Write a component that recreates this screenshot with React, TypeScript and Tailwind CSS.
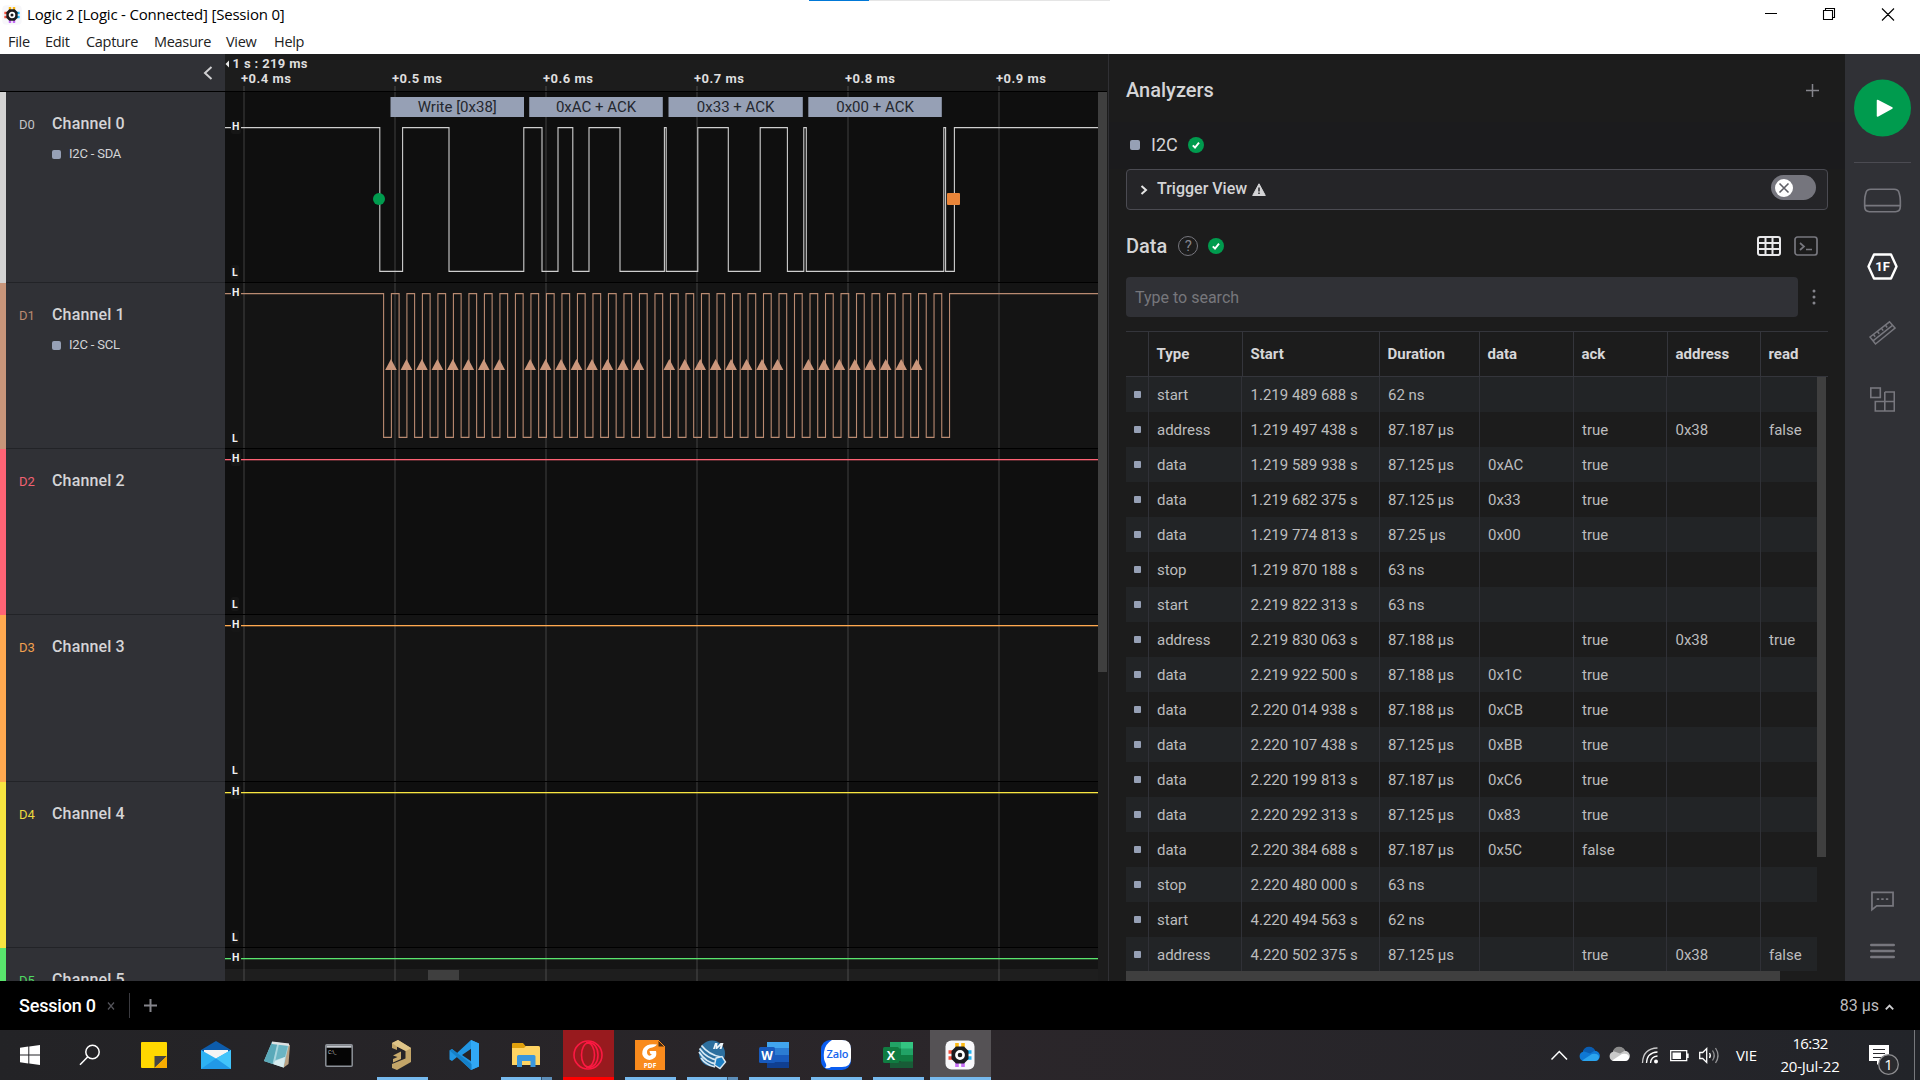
import React from "react";

type Row = [string, string, string, string, string, string, string];

const rows: Row[] = [
  ["start", "1.219 489 688 s", "62 ns", "", "", "", ""],
  ["address", "1.219 497 438 s", "87.187 µs", "", "true", "0x38", "false"],
  ["data", "1.219 589 938 s", "87.125 µs", "0xAC", "true", "", ""],
  ["data", "1.219 682 375 s", "87.125 µs", "0x33", "true", "", ""],
  ["data", "1.219 774 813 s", "87.25 µs", "0x00", "true", "", ""],
  ["stop", "1.219 870 188 s", "63 ns", "", "", "", ""],
  ["start", "2.219 822 313 s", "63 ns", "", "", "", ""],
  ["address", "2.219 830 063 s", "87.188 µs", "", "true", "0x38", "true"],
  ["data", "2.219 922 500 s", "87.188 µs", "0x1C", "true", "", ""],
  ["data", "2.220 014 938 s", "87.188 µs", "0xCB", "true", "", ""],
  ["data", "2.220 107 438 s", "87.125 µs", "0xBB", "true", "", ""],
  ["data", "2.220 199 813 s", "87.187 µs", "0xC6", "true", "", ""],
  ["data", "2.220 292 313 s", "87.125 µs", "0x83", "true", "", ""],
  ["data", "2.220 384 688 s", "87.187 µs", "0x5C", "false", "", ""],
  ["stop", "2.220 480 000 s", "63 ns", "", "", "", ""],
  ["start", "4.220 494 563 s", "62 ns", "", "", "", ""],
  ["address", "4.220 502 375 s", "87.125 µs", "", "true", "0x38", "false"],
];

const headCols = "grid-cols-[22px_94px_137px_100px_94px_94px_93px_68px]";
const bodyCols = "grid-cols-[22px_93px_138px_100px_94px_93px_94px_57px]";

const channels = [
  { id: "D0", name: "Channel 0", sub: "I2C - SDA", bar: "bg-[#d3d3d3]", text: "text-[#c3c3c6]", h: "h-[191px]" },
  { id: "D1", name: "Channel 1", sub: "I2C - SCL", bar: "bg-[#c8957a]", text: "text-[#b98a70]", h: "h-[166px]" },
  { id: "D2", name: "Channel 2", bar: "bg-[#ff6375]", text: "text-[#f06272]", h: "h-[166px]" },
  { id: "D3", name: "Channel 3", bar: "bg-[#ffa950]", text: "text-[#f0a04f]", h: "h-[167px]" },
  { id: "D4", name: "Channel 4", bar: "bg-[#f8e540]", text: "text-[#e9d83f]", h: "h-[166px]" },
  { id: "D5", name: "Channel 5", bar: "bg-[#59e56d]", text: "text-[#4fd963]", h: "h-[166px]" },
];

const lanes = [
  { top: 92, bottom: 282, color: "#dcdcdc" },
  { top: 283, bottom: 448, color: "#c8957a" },
  { top: 449, bottom: 614, color: "#ff6375" },
  { top: 615, bottom: 781, color: "#ffa950" },
  { top: 782, bottom: 947, color: "#f8e540" },
  { top: 948, bottom: 1114, color: "#59e56d" },
];
const highs = [127, 293, 459, 625, 792, 958];

const sda = [379.8, 402.6, 449, 523.8, 542, 558, 572.8, 589, 620, 664.4, 666.2, 697.8, 728.3, 760.2, 787.4, 803.8, 806.3, 943.8, 945.6, 954.4];
const scl = Array.from({ length: 37 }, (_, i) => {
  const rise = 391.4 + 15.504 * i;
  return [rise - 7.8, rise];
}).flat();

function wave(edges: number[], hi: number, lo: number) {
  let d = `M225 ${hi}`;
  edges.forEach((x, i) => {
    d += `H${x}V${i % 2 === 0 ? lo : hi}`;
  });
  return d + "H1098";
}

const bubbles = [
  { x: 390.5, w: 133.5, t: "Write [0x38]" },
  { x: 529.2, w: 133.6, t: "0xAC + ACK" },
  { x: 668.5, w: 134.3, t: "0x33 + ACK" },
  { x: 808.3, w: 133.5, t: "0x00 + ACK" },
];

function Waveforms() {
  return (
    <svg width="873" height="927" viewBox="225 54 873 927" className="block">
      <rect x="225" y="54" width="873" height="37" fill="#1c1c1c" />
      {lanes.map((l, i) => (
        <rect key={i} x="225" y={l.top} width="873" height={l.bottom - l.top} fill={i % 2 ? "#141414" : "#0f0f0f"} />
      ))}
      <rect x="225" y="969" width="873" height="12" fill="#1e1e1e" />
      {[244, 395, 546, 697, 848, 999].map((x) => (
        <rect key={x} x={x - 1} y="86" width="2" height="895" fill="#ffffff" fillOpacity="0.1" />
      ))}
      <rect x="428" y="970" width="31" height="10" fill="#3f3f3f" />
      {[91, 282, 448, 614, 781, 947].map((y) => (
        <rect key={y} x="225" y={y} width="873" height="1" fill="#000" />
      ))}
      <path d={wave(sda, 127.6, 271.4)} fill="none" stroke="#cfcfcf" strokeWidth="1.1" />
      <path d={wave(scl, 293.6, 437.4)} fill="none" stroke="#b98a71" strokeWidth="1.1" />
      {highs.slice(2).map((y, i) => (
        <rect key={y} x="225" y={y} width="873" height="1.3" fill={lanes[i + 2].color} />
      ))}
      {Array.from({ length: 36 }, (_, i) => i)
        .filter((i) => i % 9 !== 8)
        .map((i) => {
          const x = 391 + 15.46 * i;
          return <path key={i} d={`M${x - 5.8} 370L${x} 359L${x + 5.8} 370Z`} fill="#cb977c" />;
        })}
      <circle cx="379" cy="199" r="6" fill="#009b4e" />
      <rect x="947" y="193" width="13" height="12" rx="1" fill="#e98539" />
      {bubbles.map((b) => (
        <g key={b.t}>
          <rect x={b.x} y="97" width={b.w} height="20" fill="#96a0b5" />
          <text x={b.x + b.w / 2} y="112" textAnchor="middle" fontSize="15" fill="#24272e">{b.t}</text>
        </g>
      ))}
      {highs.map((y) => (
        <g key={y} fontSize="10.5" fontWeight="700" fill="#f0f0f0">
          <rect x="231" y={y - 7} width="10" height="14" rx="2" fill="#161616" />
          <text x="232" y={y + 3.2}>H</text>
          {y < 900 && <rect x="231" y={y + 138} width="8" height="14" rx="2" fill="#161616" />}
          {y < 900 && <text x="232" y={y + 148.6}>L</text>}
        </g>
      ))}
      <path d="M229 60.5V67.500L225.500 64Z" fill="#e6e6e6" />
      <text x="232.500" y="68" fontSize="13" fontWeight="700" fill="#dedede" textLength="75" xmlSpace="preserve">1 s : 219 ms</text>
      {["+0.4 ms", "+0.5 ms", "+0.6 ms", "+0.7 ms", "+0.8 ms", "+0.9 ms"].map((t, i) => (
        <text key={t} x={241 + 151 * i} y="82.500" fontSize="13" fontWeight="700" fill="#dedede" textLength="50">{t}</text>
      ))}
    </svg>
  );
}

function Check() {
  return (
    <svg width="16" height="16" viewBox="0 0 16 16">
      <circle cx="8" cy="8" r="8" fill="#009b4e" />
      <path d="M4.800 8.300L7 10.500L11 5.600" fill="none" stroke="#fff" strokeWidth="1.900" />
    </svg>
  );
}

function LogicLogo({ size }: { size: number }) {
  return (
    <svg width={size} height={size} viewBox="0 0 30 30">
      <rect x="0.500" y="0.500" width="29" height="29" rx="6" fill="#f7f7fa" />
      <path d="M12 3v6M18 3v6" stroke="#fdb913" strokeWidth="3.600" />
      <path d="M12 21v6M18 21v6" stroke="#c56cf5" strokeWidth="3.600" />
      <path d="M3.500 12h6M3.500 18h6" stroke="#f4503c" strokeWidth="3.400" />
      <path d="M20.500 12h6M20.500 18h6" stroke="#21b5f3" strokeWidth="3.400" />
      <path d="M11 6.500h8L23.500 11v8L19 23.500h-8L6.500 19v-8Z" fill="#1b1b1f" />
      <circle cx="15" cy="15" r="3.600" fill="none" stroke="#fff" strokeWidth="2.600" />
    </svg>
  );
}

function TitleBar() {
  return (
    <header className="h-[54px] bg-white font-['Open_Sans',sans-serif] text-black">
      <div className="flex h-[29px] items-center">
        <div className="ml-[2px] w-[25px]"><LogicLogo size={20} /></div>
        <span className="mb-[2px] w-[780px] text-[15px] leading-[20px] tracking-[-0.2px]">Logic 2 [Logic - Connected] [Session 0]</span>
        <div className="ml-[2px] flex h-px w-[301px] self-start bg-[#e5e5e5]">
          <div className="w-[60px] bg-[#0078d7]" />
        </div>
        <div className="ml-auto flex">
          <svg width="160" height="29" viewBox="1760 0 160 29" fill="none" stroke="#000">
            <path d="M1765 13.500h12M1823.500 10.500h9v9h-9zM1825.500 10.500v-2h9v9h-2M1882 8.500l12 12M1894 8.500l-12 12" strokeWidth="1.100" />
          </svg>
        </div>
      </div>
      <nav className="flex h-[25px] text-[14.5px] leading-[25px] tracking-[-0.3px] text-[#222]">
        <span className="ml-[8px] w-[37px]">File</span>
        <span className="w-[41px]">Edit</span>
        <span className="w-[68px]">Capture</span>
        <span className="w-[72px]">Measure</span>
        <span className="w-[48px]">View</span>
        <span>Help</span>
      </nav>
    </header>
  );
}

function ChannelList() {
  return (
    <aside className="flex h-[927px] w-[225px] flex-col overflow-hidden bg-[#303136]">
      <div className="flex h-[38px] shrink-0 items-center justify-end border-b border-black pr-[12px]">
        <svg width="10" height="14" viewBox="0 0 10 14"><path d="M8.500 1L2 7l6.500 6" fill="none" stroke="#d0d0d2" strokeWidth="2" /></svg>
      </div>
      {channels.map((c) => (
        <div key={c.id} className={`flex shrink-0 ${c.h}`}>
          <div className={`w-[6px] ${c.bar}`} />
          <div className="flex flex-1 border-b border-[#222327] pl-[13px] pt-[22px]">
            <span className={`w-[33px] pt-px text-[13px] leading-[20px] ${c.text}`}>{c.id}</span>
            <div>
              <div className="text-[16px] font-medium leading-[20px] tracking-[0.15px] text-[#d4d4d6]">{c.name}</div>
              {c.sub && (
                <div className="mt-[11px] flex items-center gap-[8px] text-[13px] leading-[18px] tracking-[-0.2px] text-[#d4d4d6]">
                  <i className="size-[9px] rounded-[2px] bg-[#96a0b5]" />
                  {c.sub}
                </div>
              )}
            </div>
          </div>
        </div>
      ))}
    </aside>
  );
}

function DataTable() {
  return (
    <div className="mt-[14px] flex h-[650px] w-[702px] flex-col">
      <div className={`grid h-[46px] shrink-0 border-y border-[#34353b] ${headCols}`}>
        {["", "Type", "Start", "Duration", "data", "ack", "address", "read"].map((h, i) => (
          <div key={i} className={`pl-[7.5px] text-[15px] font-bold leading-[44px] text-[#d6d6d8] ${i ? "border-l border-[#34353b]" : ""}`}>{h}</div>
        ))}
      </div>
      <div className="flex h-[594px] overflow-hidden">
        <div className="w-[691px]">
          {rows.map((r, i) => (
            <div key={i} className={`grid h-[35px] ${bodyCols} ${i % 2 ? "bg-[#1c1c1c]" : "bg-[#222426]"}`}>
              <div className="flex items-center pl-[8px]"><i className="mb-px size-[7px] rounded-[1px] bg-[#96a0b5]" /></div>
              {r.map((v, j) => (
                <div key={j} className={`border-l border-[#303137] text-[15px] leading-[36px] text-[#bcbcbe] ${j === 1 || j === 5 ? "pl-[8.5px]" : "pl-[8px]"}`}>{v}</div>
              ))}
            </div>
          ))}
        </div>
        <div className="h-[480px] w-[9px] bg-[#3f3f3f]" />
      </div>
      <div className="h-[10px] w-[654px] bg-[#3f3f3f]" />
    </div>
  );
}

function AnalyzerPanel() {
  return (
    <section className="h-[927px] w-[737px] overflow-hidden border-l border-[#303034] bg-[#1c1c1c] text-[#d4d4d6]">
      <div className="flex h-[68px] items-center pl-[17px] pr-[26px] pt-[4px]">
        <h1 className="flex-1 text-[20px] font-medium">Analyzers</h1>
        <svg width="13" height="13" viewBox="0 0 13 13"><path d="M6.500 0v13M0 6.500h13" stroke="#85858c" strokeWidth="1.500" /></svg>
      </div>
      <div className="flex h-[47px] items-center bg-[#1b1b1d] pb-[2px] pl-[21px]">
        <i className="size-[10px] rounded-[2px] bg-[#96a0b5]" />
        <span className="ml-[11px] mr-[10px] text-[18px] leading-[24px]">I2C</span>
        <Check />
      </div>
      <div className="ml-[17px] flex h-[41px] w-[702px] items-center rounded-[4px] border border-[#4b4b52] bg-[#252528] pl-[13px] pr-[11px]">
        <svg width="8" height="10" viewBox="0 0 8 10"><path d="M1.500 1L6 5L1.500 9" fill="none" stroke="#e6e6e6" strokeWidth="2" /></svg>
        <span className="mb-[2px] ml-[9px] mr-[5px] text-[16px] font-medium">Trigger View</span>
        <svg width="14" height="13" viewBox="0 0 14 13"><path d="M7 0.800L13.300 12.500H0.700Z" fill="#d4d4d6" stroke="#d4d4d6" strokeLinejoin="round" /><path d="M7 4.500v4M7 9.600v1.500" stroke="#252528" strokeWidth="1.500" /></svg>
        <div className="mb-[4px] ml-auto flex h-[25px] w-[45px] items-center rounded-full bg-[#75757d] pl-[4px]">
          <svg width="18" height="18" viewBox="0 0 18 18"><circle cx="9" cy="9" r="9" fill="#fff" /><path d="M4.500 4.500l9 9M13.500 4.500l-9 9" stroke="#5f5f66" strokeWidth="1.600" /></svg>
        </div>
      </div>
      <div className="flex h-[67px] items-center pl-[17px] pt-[5px]">
        <h2 className="mr-[11px] text-[20px] font-medium">Data</h2>
        <span className="mr-[10px] flex size-[20px] items-center justify-center rounded-full border-[1.5px] border-[#77777e] text-[15px] text-[#85858c]">?</span>
        <Check />
        <svg className="ml-auto mr-[13px]" width="24" height="20" viewBox="0 0 24 20" fill="none" stroke="#e8e8ea" strokeWidth="2">
          <rect x="1" y="1" width="22" height="18" rx="2" /><path d="M8.500 1v18M15.500 1v18M1 7h22M1 13h22" />
        </svg>
        <svg className="mr-[27px]" width="24" height="20" viewBox="0 0 24 20" fill="none" stroke="#77777e" strokeWidth="1.700">
          <rect x="1" y="1" width="22" height="18" rx="2.500" /><path d="M6 7l4 3.500L6 14M12 13.500h6" />
        </svg>
      </div>
      <div className="flex h-[40px] items-center pl-[17px]">
        <div className="h-[40px] w-[672px] rounded-[4px] bg-[#303136] pl-[9px] text-[16px] leading-[41px] text-[#77777c]">Type to search</div>
        <svg className="ml-[13.5px]" width="4" height="16" viewBox="0 0 4 16" fill="#85858c"><circle cx="2" cy="2" r="1.500" /><circle cx="2" cy="8" r="1.500" /><circle cx="2" cy="14" r="1.500" /></svg>
      </div>
      <div className="pl-[17px]"><DataTable /></div>
    </section>
  );
}

function Rail() {
  const s = "#77777e";
  return (
    <aside className="flex h-[927px] w-[75px] flex-col items-center bg-[#303136]">
      <svg className="mt-[25px]" width="57" height="58" viewBox="0 0 57 58"><circle cx="28.500" cy="29" r="28.500" fill="#009b4e" /><path d="M23.500 21.500L38 29L23.500 37Z" fill="#fff" stroke="#fff" strokeWidth="1.500" strokeLinejoin="round" /></svg>
      <div className="mt-[25px] h-px w-[57px] bg-[#4b4b52]" />
      <svg className="mt-[25px]" width="39" height="25" viewBox="0 0 40 25" fill="none" stroke={s} strokeWidth="1.700"><path d="M8 1h24c3 0 4.300 1 5 3.500q1.300 4 1.300 8.500v5.500c0 4-1.500 5.500-5 5.500H6.700c-3.500 0-5-1.500-5-5.500V13q0-4.500 1.300-8.500C3.700 2 5 1 8 1zM2 17.800h36" /></svg>
      <svg className="mt-[40px]" width="31" height="27" viewBox="0.500 0 31 27"><path d="M7.500 1.500h17L30 13.500L24.500 25.500h-17L2 13.500Z" fill="none" stroke="#fff" strokeWidth="2.400" strokeLinejoin="round" /><text x="16" y="18.300" textAnchor="middle" fontSize="13" fontWeight="700" fill="#fff">1F</text></svg>
      <svg className="mt-[40px]" width="27" height="26" viewBox="0.500 0 27 26" fill="none" stroke={s} strokeWidth="1.500"><path d="M1.500 17L21 1.800L26.500 8L7 24ZM4.500 20.800L24 5.300M5 14.500l1.700 2.300M9 11.500l1.700 2.300M13 8.300l1.700 2.300M17 5.200l1.700 2.300" /></svg>
      <svg className="mt-[41px]" width="25" height="26" viewBox="0.200 0 25 26" fill="none" stroke={s} strokeWidth="1.600"><rect x="1" y="1" width="9.500" height="9.500" /><path d="M15 5h9.500v19H5.500v-9.500h19M15 5v19" /></svg>
      <svg className="mt-auto" width="23" height="21" viewBox="0 0 24 21" fill="none" stroke={s} strokeWidth="1.800"><path d="M1 19V1h22v14H6Z" /><path d="M6 8h2.500M10.700 8h2.500M15.500 8h2.500" /></svg>
      <svg className="mb-[21px] mt-[31px]" width="25" height="17" viewBox="0 0 25 17" stroke={s} strokeWidth="2.600" strokeLinecap="round"><path d="M1.300 2h22.400M1.300 8h22.400M1.300 14h22.400" /></svg>
    </aside>
  );
}

function SessionBar() {
  return (
    <div className="flex h-[49px] items-center bg-black">
      <span className="ml-[19px] w-[88px] text-[18px] font-medium tracking-[-0.2px] text-white">Session 0</span>
      <svg width="8" height="8" viewBox="0 0 8 8"><path d="M1 0.500l6 7M7 0.500l-6 7" stroke="#55555b" strokeWidth="1.200" /></svg>
      <div className="ml-[14px] h-[25px] w-px bg-[#3a3a3f]" />
      <svg className="ml-[14px]" width="13" height="13" viewBox="0 0 13 13"><path d="M6.500 0v13M0 6.500h13" stroke="#85858c" strokeWidth="2" /></svg>
      <span className="ml-auto mr-[6px] text-[16px] text-[#bcbcbe]">83 µs</span>
      <svg className="mr-[26px] mt-[3px]" width="9" height="6" viewBox="0 0 9 6"><path d="M0.800 5.300L4.500 1.500L8.200 5.300" fill="none" stroke="#d0d0d2" strokeWidth="1.800" /></svg>
    </div>
  );
}

const apps: { bar?: "full" | "split"; cell?: string; icon: React.ReactNode }[] = [
  { icon: <svg width="20" height="20" viewBox="0 0 20 20" fill="#fff"><path d="M0 2.800L8.300 1.600V9.500H0ZM9.300 1.400L20 0V9.500H9.300ZM0 10.500H8.300V18.400L0 17.200ZM9.300 10.500H20V20L9.300 18.600Z" /></svg> },
  { icon: <svg className="mr-[4px]" width="22" height="22" viewBox="0 0 22 22" fill="none" stroke="#fff" strokeWidth="1.500"><circle cx="13.500" cy="8" r="6.700" /><path d="M8.800 12.800L1 20.800" /></svg> },
  { icon: <svg width="26" height="26" viewBox="0 0 26 26"><path d="M1 0h24a1 1 0 011 1v24a1 1 0 01-1 1H1a1 1 0 01-1-1V1a1 1 0 011-1z" fill="#ffd800" /><path d="M13.500 26V14H26Z" fill="#454545" /><path d="M13.500 26L26 14V26Z" fill="#f8ac00" /></svg> },
  { icon: <svg width="30" height="28" viewBox="0 0 30 28"><path d="M0 9L15 0L30 9V14H0Z" fill="#0d5cab" /><path d="M3 9H27V19H3Z" fill="#f4f4f4" /><path d="M0 9L15 17.500L30 9V28H0Z" fill="#2db2f3" /><path d="M15 17.500L30 9V28Z" fill="#42c4fa" /><path d="M0 28L15 17.500L30 28Z" fill="#1c8ee0" opacity=".7" /></svg> },
  { icon: <svg className="mr-[2px]" width="28" height="28" viewBox="0 0 28 28"><path d="M23 3L27 4L25.500 23L20 27Z" fill="#b9a183" /><path d="M9 1L26 3L20.500 26.500L1 20Z" fill="#a9d6de" /><path d="M9 1L14.500 1.700L9.500 23L1 20Z" fill="#5aa9b9" /><path d="M16 3L25 4.500L22 16L12.500 19Z" fill="#6bb5c3" /><path d="M12 20L22 16L20.500 26.500L10.500 23.200Z" fill="#d7ecef" /><path d="M9 0.500L26 2.500V5L9 3Z" fill="#dde1e2" /></svg> },
  { icon: <svg className="mr-[2px]" width="28" height="23" viewBox="0 0 28 23"><rect x="0.800" y="0.800" width="26.400" height="21.400" rx="1" fill="#050505" stroke="#8d9299" strokeWidth="1.500" /><path d="M1.500 1.500h25v2.200h-25z" fill="#c6cad0" /><text x="3" y="9.500" fontSize="5" fill="#ddd">C:\_</text></svg> },
  { bar: "full", icon: <svg width="20" height="30" viewBox="0 0 20 30"><path d="M0 3L6 0L19 8V22L5 30L0 28V24L13.500 18.500V11L5 6.500V10L0 8Z" fill="#c3a568" /><path d="M0 3L6 0L19 8L14 11L5 6.500Z" fill="#dfc588" /><path d="M1 15.500L9 11.500V19L1 22.500V19L5.500 17Z" fill="#c9ab6c" /></svg> },
  { icon: <svg width="30" height="30" viewBox="0 0 30 30"><path d="M22 0L30 3.500V26.500L22 30L8 17L3 21L0.500 19.500V10.500L3 9L8 13ZM22.500 8.500L13 15L22.500 21.500Z" fill="#2196e3" fillRule="evenodd" /><path d="M22 0L30 3.500V26.500L22 30Z" fill="#31a8f5" /><path d="M0.500 10.500L3 9L22.500 24V30L8 17Z" fill="#1580c8" /></svg> },
  { bar: "split", icon: <svg width="28" height="24" viewBox="0 0 28 24"><path d="M0 1Q0 0 1 0H11L13.500 3H26Q28 3 28 5V22H0Z" fill="#e0a10d" /><path d="M0 5H12L14 3H26Q28 3 28 5V22H0Z" fill="#ffd463" /><path d="M5 24V13.500Q5 12 6.500 12H22Q23.500 12 23.500 13.500V24H18.500V18H10V24Z" fill="#3b97dd" /></svg> },
  { cell: "opera", icon: <svg width="30" height="30" viewBox="0 0 30 30" fill="none" stroke="#fb1942" strokeWidth="1.600"><circle cx="15" cy="15" r="14" /><ellipse cx="15" cy="15" rx="6.500" ry="12" /><path d="M13 3C22 1 25 9 25 15S22 29 13 27" /></svg> },
  { bar: "full", icon: <svg width="30" height="30" viewBox="0 0 30 30"><path d="M0 0H23L30 7V30H0Z" fill="#f98b1d" /><path d="M23 0V7H30Z" fill="#4a2b10" stroke="#f98b1d" /><path d="M22 4.500Q12 3 8.500 8.500Q5.500 14 9.500 18Q15 22 20 17.500Q22 15 21 11H14.500Q15 14.500 17 14.500Q14 17 12.300 14Q11 9.500 15 8Q20 7 22 4.500Z" fill="#fff" /><text x="15" y="28" textAnchor="middle" fontSize="6.500" fontWeight="700" fill="#fff">PDF</text></svg> },
  { bar: "split", icon: <svg width="30" height="30" viewBox="0 0 30 30"><circle cx="15" cy="13.500" r="13" fill="#2c6f9f" /><path d="M2 12Q9 23 20 24M2.500 8.500Q10 19 22 20.500M4.500 5.500Q12 15 24 17M4 18Q9 25 18 27" fill="none" stroke="#d7e9f5" strokeWidth="1.700" /><path d="M16 9L18 3H20.500L20.300 6.500L23.500 3H26.500L24.500 9H22.500L23.500 5.800L20 9H18.500L18.800 5.500L17.800 9Z" fill="#eef5fa" /><path d="M19 18L25 16.500L28.500 22L23 28.500L17.500 25Z" fill="#1d7fc4" stroke="#dce9f2" strokeWidth="1.400" /></svg> },
  { bar: "full", icon: <svg width="30" height="28" viewBox="0 0 30 28"><path d="M8 1h22v7H8z" fill="#41a5ee" /><path d="M8 7h22v7H8z" fill="#2b7cd3" /><path d="M8 14h22v7H8z" fill="#185abd" /><path d="M8 21h22v6H8z" fill="#103f91" /><rect x="0" y="6" width="16" height="16" rx="1.500" fill="#185abd" /><text x="8" y="18.500" textAnchor="middle" fontSize="12" fontWeight="700" fill="#fff">W</text></svg> },
  { bar: "full", icon: <svg width="30" height="30" viewBox="0 0 30 30"><rect x="0" y="0" width="30" height="30" rx="9" fill="#0a5df0" /><path d="M11 0H21Q30 0 30 9V18Q30 27 21 27H10Q8 29 4 28Q6 26 5 24Q2 19 3 12Q4 4 11 0Z" fill="#fff" /><text x="16.500" y="18" textAnchor="middle" fontSize="11" fontWeight="600" textLength="22" fill="#1466ee">Zalo</text></svg> },
  { bar: "full", icon: <svg width="30" height="28" viewBox="0 0 30 28"><path d="M7 1h12v13H7z" fill="#21a366" /><path d="M18 1h12v7H18z" fill="#33c481" /><path d="M18 7.500h12v7H18z" fill="#21a366" /><path d="M7 7.500h11v13H7z" fill="#107c41" /><path d="M18 14h12v7H18z" fill="#107c41" /><path d="M7 20.500h23V27H7z" fill="#185c37" /><rect x="0" y="6" width="16" height="16" rx="1.500" fill="#107c41" /><text x="8" y="18.500" textAnchor="middle" fontSize="12.500" fontWeight="700" fill="#fff">X</text></svg> },
  { cell: "active", icon: <LogicLogo size={30} /> },
];

function Taskbar() {
  return (
    <footer className="flex h-[50px] bg-gradient-to-r from-[#232326] via-[#2b262a] to-[#222429] font-['Open_Sans',sans-serif] text-white">
      <div className="-ml-px flex">
        {apps.map((a, i) => (
          <div key={i} className="flex w-[62px] justify-center">
            <div className={`flex flex-col items-center ${a.cell === "opera" ? "w-[51px] bg-[#981a1e]" : a.cell === "active" ? "w-[61px] bg-[#555255]" : "w-[51px]"}`}>
              <div className="flex h-[47px] items-center pt-[3px]">{a.icon}</div>
              {a.bar === "full" && <div className="h-[3px] w-full bg-[#76b9ed]" />}
              {a.bar === "split" && (
                <div className="flex h-[3px] w-full gap-px bg-[#35506a]"><div className="w-[40px] bg-[#76b9ed]" /><div className="w-[10px] bg-[#5c8db8]" /></div>
              )}
              {a.cell === "opera" && <div className="h-[3px] w-full bg-[#ff0000]" />}
              {a.cell === "active" && <div className="h-[3px] w-full bg-[#76b9ed]" />}
            </div>
          </div>
        ))}
      </div>
      <div className="ml-auto flex items-center">
        <svg width="180" height="50" viewBox="1545 1030 180 50">
          <path d="M1551.500 1059.500L1559.300 1051.500L1567 1059.500" fill="none" stroke="#fff" strokeWidth="1.500" />
          <path d="M1583.500 1061a4.800 4.800 0 01-.500-9.300a6.500 6.500 0 0112-.900a5 5 0 01-.300 10.200z" fill="#0f78d4" />
          <path d="M1583 1051a6.500 6.500 0 0112-.500l-5 3z" fill="#0a5cb0" />
          <path d="M1582 1060.500L1592 1054q7-1 7 3.500q-.500 3.500-4 3.500h-11z" fill="#2ba4ee" />
          <path d="M1613.500 1061a4.800 4.800 0 01-.500-9.300a6.500 6.500 0 0112-.900a5 5 0 01-.300 10.200z" fill="#c9c9c9" />
          <path d="M1613 1051a6.500 6.500 0 0112-.500l-5 3z" fill="#8b8b8b" />
          <path d="M1612 1060.500L1622 1054q7-1 7 3.500q-.500 3.500-4 3.500h-11z" fill="#fff" />
          <g fill="none" stroke="#fff" strokeWidth="1.300">
            <path d="M1642.500 1063Q1643 1048.500 1657.500 1048" opacity=".75" />
            <path d="M1646.500 1063Q1647 1052.500 1657.500 1052" />
            <path d="M1650.500 1063Q1651 1056.500 1657.500 1056" />
            <path d="M1670.700 1050.700h16v10h-16zM1688 1053.500v4.500" />
            <path d="M1699.700 1052.500h3l4-4v14l-4-4h-3z" />
            <path d="M1709.500 1053q1.700 2.500 0 5" />
            <path d="M1712.500 1050.500q3.500 5 0 10M1715.500 1048q5 7.500 0 15" opacity=".5" />
          </g>
          <circle cx="1656" cy="1061.500" r="2" fill="#fff" />
          <rect x="1672.500" y="1052.500" width="8.500" height="6.500" fill="#fff" />
        </svg>
        <span className="ml-[11px] w-[35px] text-[15px] tracking-[-0.2px]">VIE</span>
        <div className="w-[78px] text-center text-[15px] leading-[23px]">
          <div className="-mt-px tracking-[-0.6px]">16:32</div>
          <div className="tracking-[-0.2px]">20-Jul-22</div>
        </div>
        <svg className="ml-[19px]" width="48" height="50" viewBox="1868 1030 48 50">
          <path d="M1869 1045h20v16h-8l-4 4v-4h-8z" fill="#fff" />
          <path d="M1873 1049.500h12M1873 1053.500h12M1873 1057.500h8" stroke="#2a2a2e" strokeWidth="1.200" />
          <circle cx="1888.500" cy="1064.500" r="9.800" fill="#2a2b2f" stroke="#8d8d90" strokeWidth="1.300" />
          <text x="1888.500" y="1070" textAnchor="middle" fontSize="15" fill="#fff">1</text>
          <path d="M1914.500 1030v50" stroke="#77787c" />
        </svg>
        <div className="w-[4px]" />
      </div>
    </footer>
  );
}

export default function App() {
  return (
    <div className="h-[1080px] w-[1920px] overflow-hidden bg-black font-[Roboto,sans-serif]">
      <TitleBar />
      <main className="flex h-[927px]">
        <ChannelList />
        <Waveforms />
        <div className="w-[10px] bg-[#1c1c1c]">
          <div className="h-[37px]" />
          <div className="h-[581px] w-[9px] border-t border-black bg-[#3f3f3f]" />
        </div>
        <AnalyzerPanel />
        <Rail />
      </main>
      <SessionBar />
      <Taskbar />
    </div>
  );
}
